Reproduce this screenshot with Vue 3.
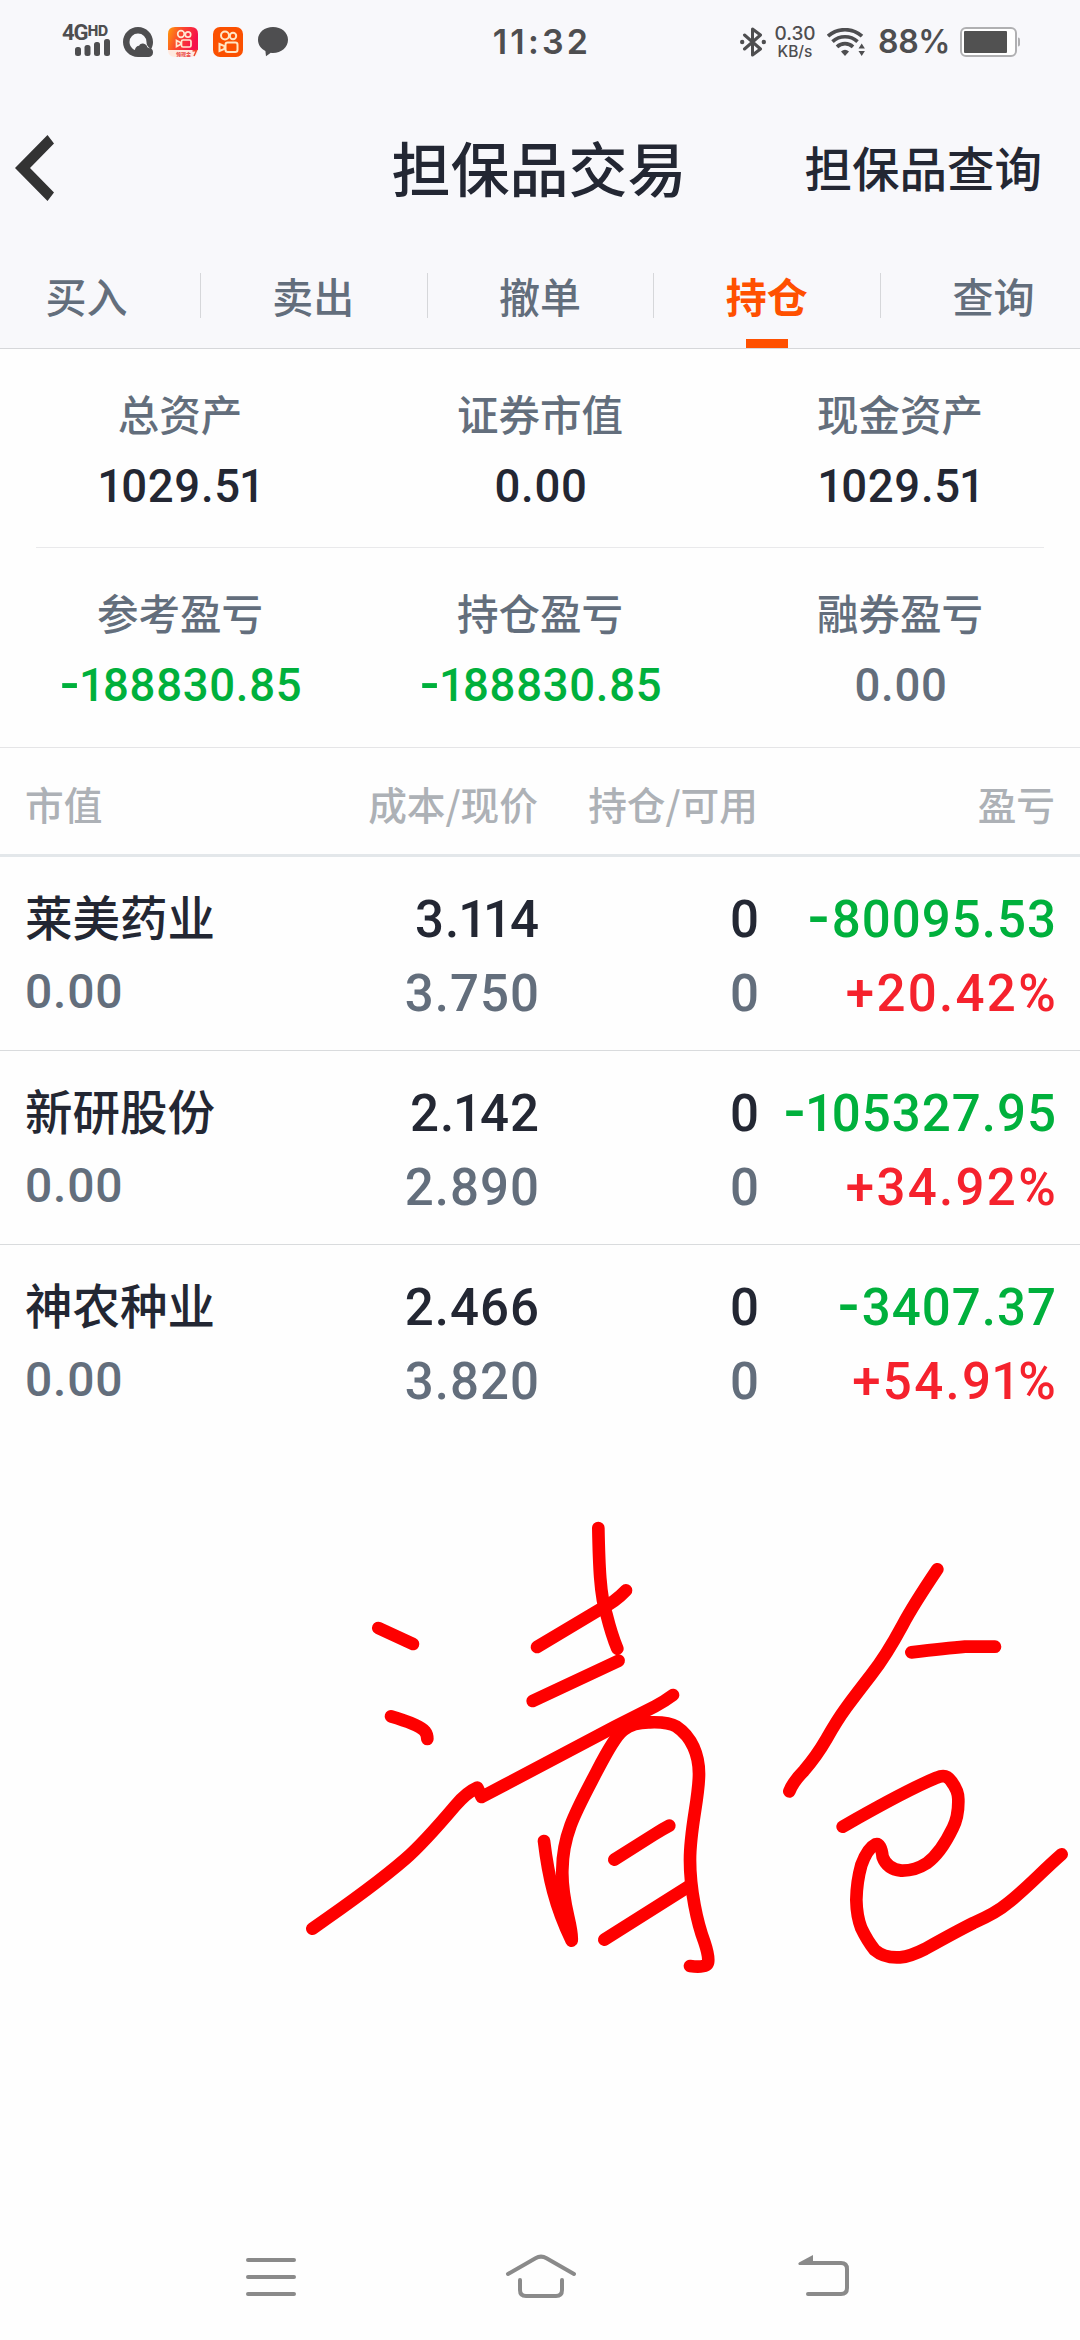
<script setup>
const tabs = [
  { label: '买入' },
  { label: '卖出' },
  { label: '撤单' },
  { label: '持仓', active: true },
  { label: '查询' },
]

const summary = [
  [
    { label: '总资产', value: '1029.51', tone: 'ink' },
    { label: '证券市值', value: '0.00', tone: 'ink' },
    { label: '现金资产', value: '1029.51', tone: 'ink' },
  ],
  [
    { label: '参考盈亏', value: '-188830.85', tone: 'down' },
    { label: '持仓盈亏', value: '-188830.85', tone: 'down' },
    { label: '融券盈亏', value: '0.00', tone: 'muted' },
  ],
]

const holdings = [
  { name: '莱美药业', market: '0.00', figures: [['3.114', '3.750'], ['0', '0'], ['-80095.53', '+20.42%']] },
  { name: '新研股份', market: '0.00', figures: [['2.142', '2.890'], ['0', '0'], ['-105327.95', '+34.92%']] },
  { name: '神农种业', market: '0.00', figures: [['2.466', '3.820'], ['0', '0'], ['-3407.37', '+54.91%']] },
]

const toneOf = (text, line) => {
  if (text.startsWith('-')) return 'down'
  if (text.startsWith('+')) return 'up'
  return line === 0 ? 'ink' : 'muted'
}

// The digit 1 and the minus sign need their own side bearings.
const glyphClass = (ch) => ({ one: ch === '1', minus: ch === '-' })
</script>

<template>
  <div class="screen">
    <header class="top">
      <div class="status">
        <div class="status-left">
          <div class="signal">
            <div class="net"><b>4G</b><i>HD</i></div>
            <svg width="36" height="17" viewBox="0 0 36 17" fill="#4e4e50">
              <rect x="0" y="8" width="6" height="9" rx="2.5" />
              <rect x="9.5" y="6" width="6" height="11" rx="2.5" />
              <rect x="19" y="3" width="6" height="14" rx="2.5" />
              <rect x="29" y="0" width="6" height="17" rx="2.5" />
            </svg>
          </div>
          <svg class="app" width="30" height="30" viewBox="0 0 30 30">
            <path fill="#4e4e50" fill-rule="evenodd" d="M15 0C23.300 0 30 6.700 30 15c0 2.600-.6 4.800-1.700 6.800 1.300 1 1.700 2.100 1.700 3.600 0 2.800-2 4.600-4.600 4.600H15C6.700 30 0 23.300 0 15S6.700 0 15 0ZM15 6.500A8.500 8.500 0 0 0 6.500 15c0 3.600 2.300 6.700 5.400 8 .4-2.600 2-4.200 4.200-4.200.8-1.600 2.300-2.400 4-2.200 2.300.2 3.800 1.800 4.200 3.700l2.700 1.200C24 19 23.500 17.500 23.500 15A8.500 8.500 0 0 0 15 6.500Z" />
          </svg>
          <svg class="app" width="30" height="30" viewBox="0 0 30 30">
            <defs>
              <linearGradient id="ks" x1="0" y1="0" x2="1" y2="0.300">
                <stop offset="0" stop-color="#ff9c0a" />
                <stop offset="0.450" stop-color="#fb4a2c" />
                <stop offset="1" stop-color="#f6104c" />
              </linearGradient>
            </defs>
            <path d="M7 0h16q7 0 7 7v16H0V7q0-7 7-7Z" fill="url(#ks)" />
            <path d="M0 23h30q0 7-7 7H7q-7 0-7-7Z" fill="#ffe9df" />
            <g fill="none" stroke="#ffe9d2" stroke-width="1.700">
              <circle cx="13" cy="7" r="3.300" />
              <circle cx="20" cy="7.500" r="2.700" />
              <rect x="13.500" y="13" width="9.500" height="7" rx="1.500" />
              <path d="M8.500 13.500l4 2v2l-4 2Z" />
            </g>
            <text x="8" y="29" class="tiny">领现金</text>
            <path d="M24.500 24l4-.5-2.500 5.500" fill="none" stroke="#f0492c" stroke-width="1.500" />
          </svg>
          <svg class="app" width="30" height="30" viewBox="0 0 30 30">
            <rect width="30" height="30" rx="7" fill="#fb5000" />
            <g fill="none" stroke="#ffe6c4" stroke-width="2">
              <circle cx="12" cy="8.500" r="4" />
              <circle cx="20" cy="9" r="3.200" />
              <rect x="12.500" y="15.500" width="12" height="9.500" rx="2.200" />
              <path d="M6.500 17l5 2.200v2.600l-5 2.200Z" />
            </g>
          </svg>
          <svg class="app" width="30" height="30" viewBox="0 0 30 30" fill="#4e4e50">
            <path d="M15 0c8.300 0 15 5.400 15 12.800S23.300 26 15 26c-.8 0-1.500 0-2.200-.2L8 29.200l-.6-5.200C3 22 0 17.600 0 12.800 0 5.400 6.700 0 15 0Z" />
          </svg>
        </div>
        <div class="clock">11:32</div>
        <div class="status-right">
          <svg width="26" height="30" viewBox="0 0 26 30">
            <path d="M4.500 8l16 14-8 6V2l8 6-16 14" fill="none" stroke="#4e4e50" stroke-width="3" stroke-linejoin="round" stroke-linecap="round" />
            <circle cx="2.200" cy="15" r="2.200" fill="#4e4e50" />
            <circle cx="23.800" cy="15" r="2.200" fill="#4e4e50" />
          </svg>
          <div class="speed"><span class="rate">0.30</span><span class="unit">KB/s</span></div>
          <svg class="wifi" width="38" height="28" viewBox="0 0 38 28">
            <g fill="none" stroke="#4e4e50" stroke-width="3.700">
              <path d="M1 8.200a25.500 25.500 0 0 1 34 0" />
              <path d="M5.500 13.600a18.500 18.500 0 0 1 25 0" />
              <path d="M10 18.800a11.800 11.800 0 0 1 16 0" />
            </g>
            <path d="M14 23.500q4-3.600 8 0L18 28Z" fill="#4e4e50" />
            <path d="M31.500 20.500l3.200-5 3.200 5Zm0 2.500h6.400l-3.200 5Z" fill="#4e4e50" />
          </svg>
          <div class="percent">88%</div>
          <svg class="battery" width="61" height="30" viewBox="0 0 61 30">
            <rect x="1" y="1" width="55" height="28" rx="5" fill="#fff" stroke="#b0b0b2" stroke-width="2" />
            <rect x="4" y="4" width="43" height="22" rx="1" fill="#515151" />
            <path d="M58 10.500q2 0 2 2v5q0 2-2 2Z" fill="#b0b0b2" />
          </svg>
        </div>
      </div>

      <div class="title-bar">
        <svg class="back" width="40" height="66" viewBox="0 0 40 66" fill="#333">
          <path d="M0 33L32.500 0 39 8.500 15 33 39 57.500 32.500 66Z" />
        </svg>
        <h1>担保品交易</h1>
        <a class="action">担保品查询</a>
      </div>

      <nav class="tabs">
        <div v-for="t in tabs" :key="t.label" class="tab" :class="{ active: t.active }">
          <span>{{ t.label }}</span>
        </div>
      </nav>
    </header>

    <section v-for="(row, i) in summary" :key="i" class="summary" :class="{ inset: i === 0 }">
      <div v-for="c in row" :key="c.label" class="cell">
        <div class="label">{{ c.label }}</div>
        <div class="value" :class="c.tone"><span v-for="(ch, k) in c.value" :key="k" :class="glyphClass(ch)">{{ ch }}</span></div>
      </div>
    </section>

    <div class="cols head">
      <span>市值</span><span>成本/现价</span><span>持仓/可用</span><span>盈亏</span>
    </div>

    <div v-for="h in holdings" :key="h.name" class="cols holding">
      <div class="first">
        <div class="name">{{ h.name }}</div>
        <div class="market">{{ h.market }}</div>
      </div>
      <div v-for="(pair, p) in h.figures" :key="p" class="num">
        <div v-for="(text, line) in pair" :key="line" :class="toneOf(text, line)"><span v-for="(ch, k) in text" :key="k" :class="glyphClass(ch)">{{ ch }}</span></div>
      </div>
    </div>

    <!-- freehand marker strokes -->
    <svg class="ink-layer" width="1080" height="769" viewBox="0 1439 1080 769">
      <g fill="none" stroke="#fe0000" stroke-width="38" stroke-linecap="round" stroke-linejoin="round">
        <g transform="translate(290 1500) scale(0.33333)">
          <path d="M925 84C927 190 930 290 950 345Q965 405 982 446" />
          <path d="M741 441L930 328Q975 306 1008 271" />
          <path d="M728 603L986 482" />
          <path d="M265 384L369 432" />
          <path d="M303 649Q385 673 404 693Q412 703 412 717" />
          <path d="M67 1286Q250 1160 345 1078Q400 1030 495 918Q530 877 562 863L575 891L975 680L1095 619Q1125 603 1149 585" />
          <path d="M762 1023C775 1130 795 1220 845 1322C850 1280 814 1210 817 1110C818 1000 860 930 920 815Q975 708 1000 690Q1030 666 1080 667Q1135 665 1160 680C1205 710 1228 765 1227 825C1226 900 1200 985 1200 1080C1200 1170 1222 1270 1243 1325Q1258 1370 1254 1388Q1250 1405 1200 1398" />
          <path d="M973 1079L1090 1005Q1115 989 1138 977" />
          <path d="M943 1319L1195 1160" />
        </g>
        <g transform="translate(740 1540) scale(0.33333)">
          <path d="M592 88Q520 195 488 255Q438 348 393 405Q345 467 320 501Q290 542 260 596Q230 648 192 692Q160 724 148 754" />
          <path d="M514 337Q620 325 675 320H765" />
          <path d="M308 860Q500 750 590 713Q618 700 634 724Q656 753 655 780Q656 830 638 865Q602 940 560 970Q525 993 484 992Q441 987 428 951Q423 908 406 913Q382 925 364 975Q350 1025 349 1080Q350 1130 364 1165Q382 1203 404 1230Q433 1255 480 1252Q510 1250 555 1227Q650 1174 700 1149Q770 1118 800 1092C850 1055 900 1000 965 943" />
        </g>
      </g>
    </svg>

    <footer class="sysnav">
      <svg width="660" height="110" viewBox="220 2220 660 110" fill="none" stroke="#8a8a8a" stroke-width="4" stroke-linecap="round">
        <path d="M248 2260H294M248 2277H294M248 2294H294" />
        <path d="M508 2274L535.500 2258.300Q541 2255 546.500 2258.300L574 2274" />
        <path d="M520 2280V2290Q520 2296 526 2296H556Q562 2296 562 2290V2280" />
        <path d="M804 2263H841Q847 2263 847 2269V2288Q847 2294 841 2294H808" />
        <path d="M813 2255V2265H799Q797.500 2263.500 799 2262.500Z" fill="#8a8a8a" stroke="none" />
      </svg>
    </footer>
  </div>
</template>

<style>
body {
  background: #fefefe;
}
</style>

<style scoped>
.screen {
  width: 1080px;
  height: 2340px;
  overflow: hidden;
  display: flex;
  flex-direction: column;
  background: #fefefe;
  font-family: Roboto, "Noto Sans CJK SC", sans-serif;
  font-weight: 500;
  color: #232733;
}
.top {
  height: 349px;
  box-sizing: border-box;
  border-bottom: 1px solid #d6d7da;
  background: #f8f8fb;
  flex: none;
}
.status {
  height: 84px;
  display: grid;
  grid-template-columns: 440px 200px 440px;
  align-items: center;
  color: #4e4e50;
}
.status svg {
  display: block;
}
.status-left {
  display: flex;
  padding-left: 62px;
}
.signal {
  width: 61px;
  height: 34px;
  margin-top: -3px;
}
.signal svg {
  margin: -1px 0 0 13px;
}
.net {
  display: flex;
  height: 16px;
  line-height: 18px;
  white-space: nowrap;
}
.net b {
  font-size: 22px;
  font-weight: 700;
  letter-spacing: -1px;
}
.net i {
  font: 800 14px/13px Inter, sans-serif;
}
.app {
  margin-right: 15px;
}
.tiny {
  font: 700 5px "Noto Sans CJK SC", sans-serif;
  fill: #e8403a;
}
.clock {
  text-align: center;
  font: 600 34px/84px Inter, sans-serif;
  letter-spacing: 3.200px;
  padding-left: 4px;
}
.status-right {
  display: flex;
  align-items: center;
  padding-left: 100px;
}
.speed {
  width: 42px;
  margin-left: 8px;
  display: flex;
  flex-direction: column;
  align-items: center;
  font-family: Inter, sans-serif;
}
.rate {
  font-size: 19px;
  line-height: 18px;
}
.unit {
  font-size: 15.500px;
  line-height: 17px;
}
.wifi {
  margin-left: 11px;
}
.percent {
  width: 69px;
  margin-left: 13px;
  font: 600 32px/40px Inter, sans-serif;
  letter-spacing: -0.300px;
}
.battery {
  margin-left: 13px;
}
.title-bar {
  height: 159px;
  padding: 7px 0 0 15px;
  box-sizing: border-box;
  display: grid;
  grid-template-columns: 374px 300px 353px;
  align-items: center;
}
.title-bar h1 {
  margin: 0;
  font: 500 59px/80px "Noto Sans CJK SC", sans-serif;
  text-align: center;
  white-space: nowrap;
}
.back {
  margin-top: 1px;
}
.action {
  font: 500 47.500px/80px "Noto Sans CJK SC", sans-serif;
  text-align: right;
}
.tabs {
  height: 105px;
  margin: 0 -27px;
  display: grid;
  grid-template-columns: repeat(5, 1fr);
}
.tab {
  display: flex;
  justify-content: center;
  align-items: center;
  padding-bottom: 2px;
  color: #636e7c;
  font: 500 41px/60px "Noto Sans CJK SC", sans-serif;
  position: relative;
}
.tab + .tab::before {
  content: "";
  position: absolute;
  left: 0;
  top: 30px;
  width: 1px;
  height: 45px;
  background: #d6d7da;
}
.tab.active {
  color: #ff5000;
  font-weight: 700;
}
.tab.active::after {
  content: "";
  position: absolute;
  bottom: 0;
  left: 50%;
  width: 42px;
  height: 9px;
  margin-left: -21px;
  background: #ff5000;
}
.summary {
  flex: none;
  height: 199px;
  box-sizing: border-box;
  padding-top: 34px;
  display: grid;
  grid-template-columns: repeat(3, 1fr);
  text-align: center;
  border-bottom: 1px solid #e5e5e7;
}
.summary.inset {
  margin: 0 36px;
  grid-template-columns: 288px 432px 288px;
  border-color: #e9e9eb;
}
.summary + .summary {
  height: 200px;
}
.label {
  color: #636e7c;
  font: 500 41.500px/60px "Noto Sans CJK SC", sans-serif;
}
.value {
  margin-top: 14px;
  padding-left: 2px;
  font-size: 45.500px;
  line-height: 60px;
  letter-spacing: 0.700px;
}
.ink {
  color: #232733;
}
.muted {
  color: #636e7c;
}
.down {
  color: #00b03c;
}
.up {
  color: #f5222d;
}
.one {
  margin-left: -0.040em;
  letter-spacing: -0.040em;
}
.minus {
  display: inline-block;
  margin: 0 0.060em 0 0.050em;
  transform: translateY(-0.050em) scale(1.250, 1.150);
}
.cols {
  flex: none;
  display: grid;
  grid-template-columns: 200px 313px 220px 297px;
  padding-left: 25px;
}
.cols > * + * {
  text-align: right;
}
.head {
  height: 109px;
  box-sizing: border-box;
  padding-top: 25px;
  border-bottom: 3px solid #e3e7ea;
  color: #adb1b6;
  font: 500 38.700px/60px "Noto Sans CJK SC", sans-serif;
  white-space: nowrap;
}
.holding {
  height: 194px;
  box-sizing: border-box;
  border-bottom: 1px solid #d9dbdd;
}
.holding:nth-last-of-type(1) {
  border-color: transparent;
}
.first {
  padding-top: 29px;
}
.name {
  font: 500 47.500px/60px "Noto Sans CJK SC", sans-serif;
  white-space: nowrap;
}
.market {
  margin-top: 16px;
  color: #636e7c;
  font-size: 48px;
  line-height: 60px;
  letter-spacing: 0.800px;
}
.num {
  padding-top: 33px;
  margin-right: -2px;
  font-size: 51px;
  line-height: 60px;
  letter-spacing: 1px;
  white-space: nowrap;
}
.num div + div {
  margin-top: 14px;
}
.num .up {
  margin-right: -1px;
  letter-spacing: 2.300px;
}
.ink-layer {
  display: block;
  flex: none;
}
.sysnav {
  display: flex;
  justify-content: center;
  margin: 12px 20px 0 0;
}
.sysnav svg {
  flex: none;
  margin-left: 40px;
}
</style>
